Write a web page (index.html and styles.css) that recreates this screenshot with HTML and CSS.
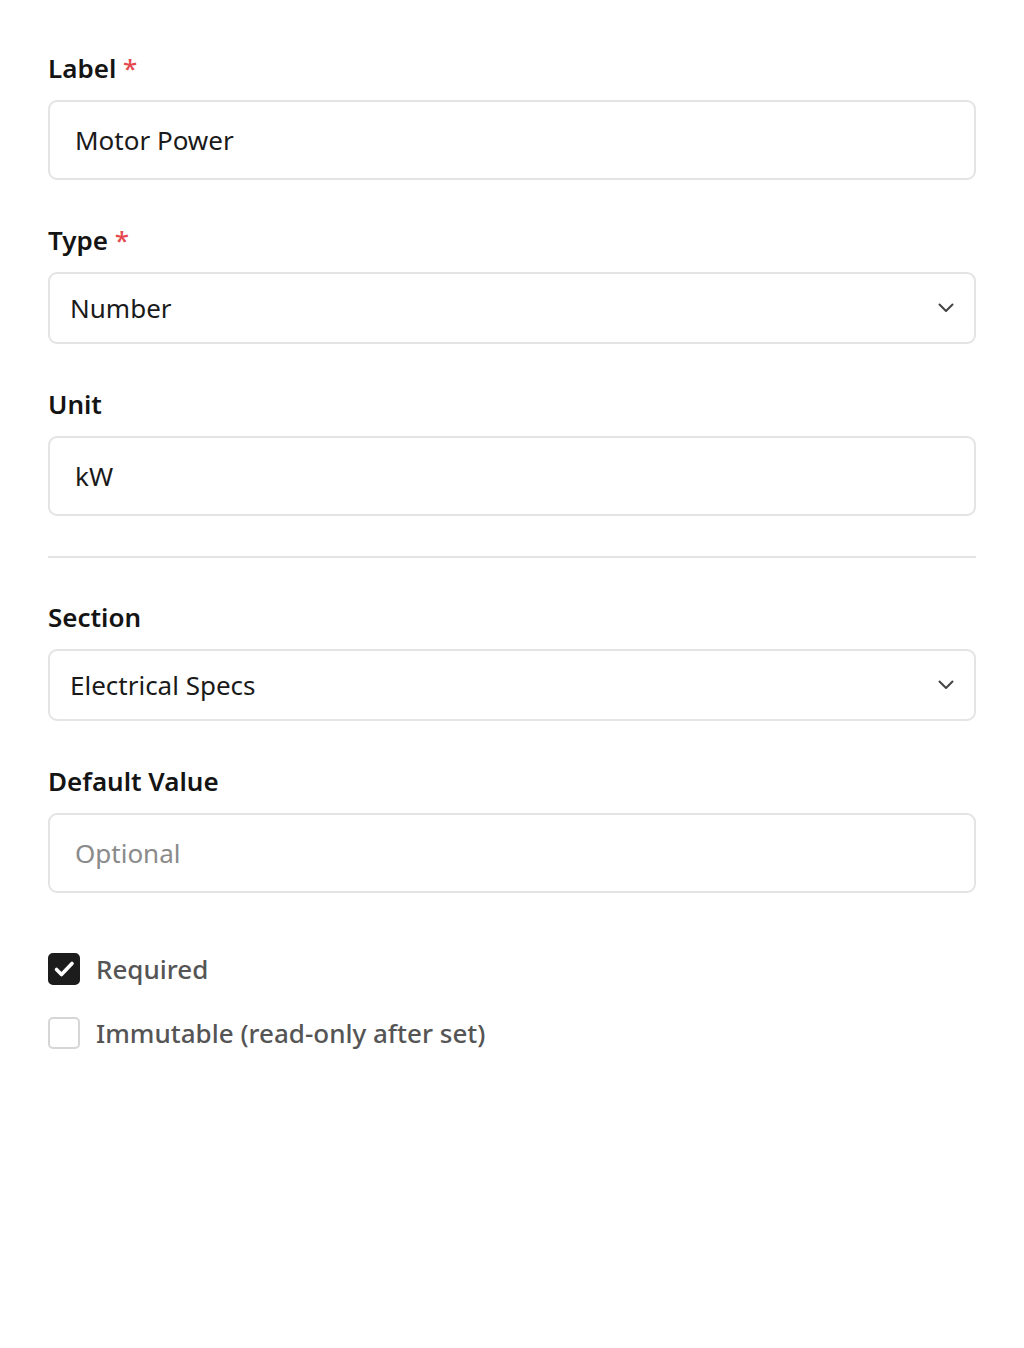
FILE: index.html
```html
<!DOCTYPE html>
<html lang="en">
<head>
<meta charset="utf-8">
<title>Field editor</title>
<link rel="stylesheet" href="styles.css">
</head>
<body>
<form class="form">
  <div class="field">
    <label class="label">Label <span class="req">*</span></label>
    <div class="input">Motor Power</div>
  </div>
  <div class="field">
    <label class="label">Type <span class="req">*</span></label>
    <div class="select">
      <span>Number</span>
      <svg class="chev" viewBox="0 0 16 10" width="16" height="10"><path d="M1.5 1.5 L8 8 L14.5 1.5" fill="none" stroke="#444" stroke-width="2" stroke-linecap="round" stroke-linejoin="round"/></svg>
    </div>
  </div>
  <div class="field last-before-divider">
    <label class="label">Unit</label>
    <div class="input">kW</div>
  </div>
  <hr class="divider">
  <div class="field">
    <label class="label">Section</label>
    <div class="select">
      <span>Electrical Specs</span>
      <svg class="chev" viewBox="0 0 16 10" width="16" height="10"><path d="M1.5 1.5 L8 8 L14.5 1.5" fill="none" stroke="#444" stroke-width="2" stroke-linecap="round" stroke-linejoin="round"/></svg>
    </div>
  </div>
  <div class="field">
    <label class="label">Default Value</label>
    <div class="input placeholder">Optional</div>
  </div>
  <div class="checks">
    <div class="check">
      <span class="box checked"><svg viewBox="0 0 32 32" width="32" height="32"><path d="M8.5 16.5 L13.5 21.5 L24 10.5" fill="none" stroke="#fff" stroke-width="3.6" stroke-linecap="round" stroke-linejoin="round"/></svg></span>
      <span class="check-text">Required</span>
    </div>
    <div class="check">
      <span class="box"></span>
      <span class="check-text">Immutable (read-only after set)</span>
    </div>
  </div>
</form>
</body>
</html>
```

FILE: styles.css
```css
* { box-sizing: border-box; }
html, body { margin: 0; padding: 0; background: #fff; }
body {
  font-family: "Noto Sans", "Open Sans", sans-serif;
  color: #1a1a1a;
}
.form {
  padding: 50px 48px 0 48px;
  display: flex;
  flex-direction: column;
}
.field {
  display: flex;
  flex-direction: column;
  gap: 14px;
  margin-bottom: 42px;
}
.field.last-before-divider { margin-bottom: 40px; }
.label {
  font-size: 26px;
  line-height: 36px;
  font-weight: 600;
  color: #141414;
}
.req { color: #e5484d; font-weight: 500; }
.input {
  height: 80px;
  border: 2px solid #e4e4e4;
  border-radius: 9px;
  padding: 0 25px;
  display: flex;
  align-items: center;
  font-size: 26px;
  color: #1a1a1a;
}
.input.placeholder { color: #8a8a8a; }
.select {
  height: 72px;
  border: 2px solid #e4e4e4;
  border-radius: 9px;
  padding: 0 20px 0 20px;
  display: flex;
  align-items: center;
  justify-content: space-between;
  font-size: 26px;
  color: #1a1a1a;
}
.chev { display: block; margin-right: 0; }
.divider {
  border: 0;
  height: 2px;
  background: #e4e4e4;
  margin: 0 0 41px 0;
}
.checks {
  margin-top: 18px;
  display: flex;
  flex-direction: column;
  gap: 32px;
}
.check {
  display: flex;
  align-items: center;
  gap: 16px;
}
.box {
  width: 32px;
  height: 32px;
  border-radius: 5px;
  border: 2px solid #d6d6d6;
  background: #fff;
  flex: none;
}
.box.checked {
  background: #1c1c1c;
  border-color: #1c1c1c;
  display: flex;
  align-items: center;
  justify-content: center;
}
.box.checked svg { display: block; margin: -2px; }
.check-text {
  font-size: 26px;
  line-height: 32px;
  font-weight: 500;
  color: #555;
}
```
